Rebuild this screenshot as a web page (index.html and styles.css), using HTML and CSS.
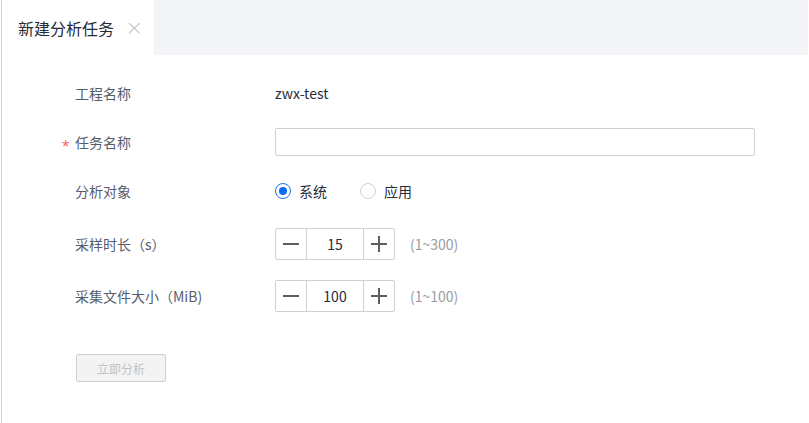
FILE: index.html
```html
<!DOCTYPE html>
<html lang="zh">
<head>
<meta charset="utf-8">
<link rel="stylesheet" href="styles.css">
</head>
<body>
<div class="page">
  <div class="tabs">
    <div class="tab">
      <span class="tab-title">新建分析任务</span>
      <span class="tab-close">×</span>
    </div>
    <div class="tab-rest"></div>
  </div>
  <div class="form">
    <div class="row">
      <div class="label">工程名称</div>
      <div class="value">zwx-test</div>
    </div>
    <div class="row">
      <div class="label"><span class="star">*</span>任务名称</div>
      <input class="text-input" type="text">
    </div>
    <div class="row">
      <div class="label">分析对象</div>
      <div class="radios">
        <span class="radio checked"></span><span class="radio-text">系统</span>
        <span class="radio"></span><span class="radio-text">应用</span>
      </div>
    </div>
    <div class="row row-spin">
      <div class="label">采样时长（s）</div>
      <div class="spinner">
        <span class="spin-btn minus"></span>
        <span class="spin-val">15</span>
        <span class="spin-btn plus"></span>
      </div>
      <span class="range">(1~300)</span>
    </div>
    <div class="row">
      <div class="label">采集文件大小（MiB)</div>
      <div class="spinner">
        <span class="spin-btn minus"></span>
        <span class="spin-val">100</span>
        <span class="spin-btn plus"></span>
      </div>
      <span class="range">(1~100)</span>
    </div>
    <div class="actions">
      <button class="btn-disabled" disabled>立即分析</button>
    </div>
  </div>
</div>
</body>
</html>
```

FILE: styles.css
```css
html, body {
  margin: 0;
  padding: 0;
  background: #fff;
}
body {
  font-family: "Noto Sans CJK SC", "Noto Sans", sans-serif;
  color: #333;
}
.page {
  width: 807px;
  height: 423px;
  border-left: 1px solid #d4d4dc;
  margin-left: 1px;
  box-sizing: border-box;
}
.tabs {
  display: flex;
  height: 55px;
}
.tab {
  width: 152px;
  display: flex;
  align-items: center;
  padding-left: 16px;
  box-sizing: border-box;
  background: #fff;
}
.tab-title {
  font-size: 16px;
  color: #252b3a;
  line-height: 20px;
}
.tab-close {
  margin-left: 11px;
  font-size: 22px;
  color: #c4c4c4;
  font-family: "DejaVu Sans", sans-serif;
  font-weight: 300;
  line-height: 20px;
}
.tab-rest {
  flex: 1;
  background: #f3f4f8;
}
.form {
  padding: 23px 0 0 73px;
}
.row {
  display: flex;
  align-items: center;
  min-height: 30px;
  margin-bottom: 19px;
}
.row-spin {
  margin-top: 22px;
  margin-bottom: 20px;
}
.label {
  width: 200px;
  font-size: 14px;
  color: #575d6c;
  position: relative;
}
.star {
  position: absolute;
  left: -13px;
  top: 4px;
  color: #f66f6a;
  font-size: 19px;
  font-family: "Liberation Sans", sans-serif;
}
.value {
  font-size: 14px;
  color: #252b3a;
}
.text-input {
  width: 480px;
  height: 28px;
  box-sizing: border-box;
  border: 1px solid #cfd1d6;
  border-radius: 2px;
  margin: 0;
  padding: 0 8px;
  outline: none;
}
.radios {
  display: flex;
  align-items: center;
  font-size: 14px;
  color: #252b3a;
}
.radio {
  width: 16px;
  height: 16px;
  border: 1px solid #cfd1d6;
  border-radius: 50%;
  box-sizing: border-box;
  position: relative;
}
.radio.checked {
  border-color: #1a73e8;
}
.radio.checked::after {
  content: "";
  position: absolute;
  left: 3px;
  top: 3px;
  width: 8px;
  height: 8px;
  border-radius: 50%;
  background: #0a6cf5;
}
.radio-text {
  margin-left: 8px;
  margin-right: 33px;
}
.spinner {
  display: flex;
  width: 120px;
  height: 32px;
  border: 1px solid #cfd1d6;
  border-radius: 2px;
  box-sizing: border-box;
}
.spin-btn {
  width: 30px;
  position: relative;
}
.spin-btn.minus {
  border-right: 1px solid #cfd1d6;
}
.spin-btn.plus {
  border-left: 1px solid #cfd1d6;
}
.spin-btn::before {
  content: "";
  position: absolute;
  left: 7px;
  top: 14px;
  width: 16px;
  height: 2px;
  background: #5e5e5e;
}
.spin-btn.plus::after {
  content: "";
  position: absolute;
  left: 14px;
  top: 7px;
  width: 2px;
  height: 16px;
  background: #5e5e5e;
}
.spin-val {
  flex: 1;
  display: flex;
  align-items: center;
  justify-content: center;
  font-size: 14px;
  color: #252b3a;
}
.range {
  margin-left: 15px;
  font-size: 14px;
  color: #9a9ca3;
}
.actions {
  padding-top: 23px;
}
.btn-disabled {
  width: 90px;
  height: 28px;
  border: 1px solid #d0d0d0;
  border-radius: 2px;
  background: #f3f3f3;
  color: #c2c2c2;
  font-family: "Noto Sans CJK SC", sans-serif;
  font-size: 12px;
  padding: 0;
  margin-left: 1px;
}
```
